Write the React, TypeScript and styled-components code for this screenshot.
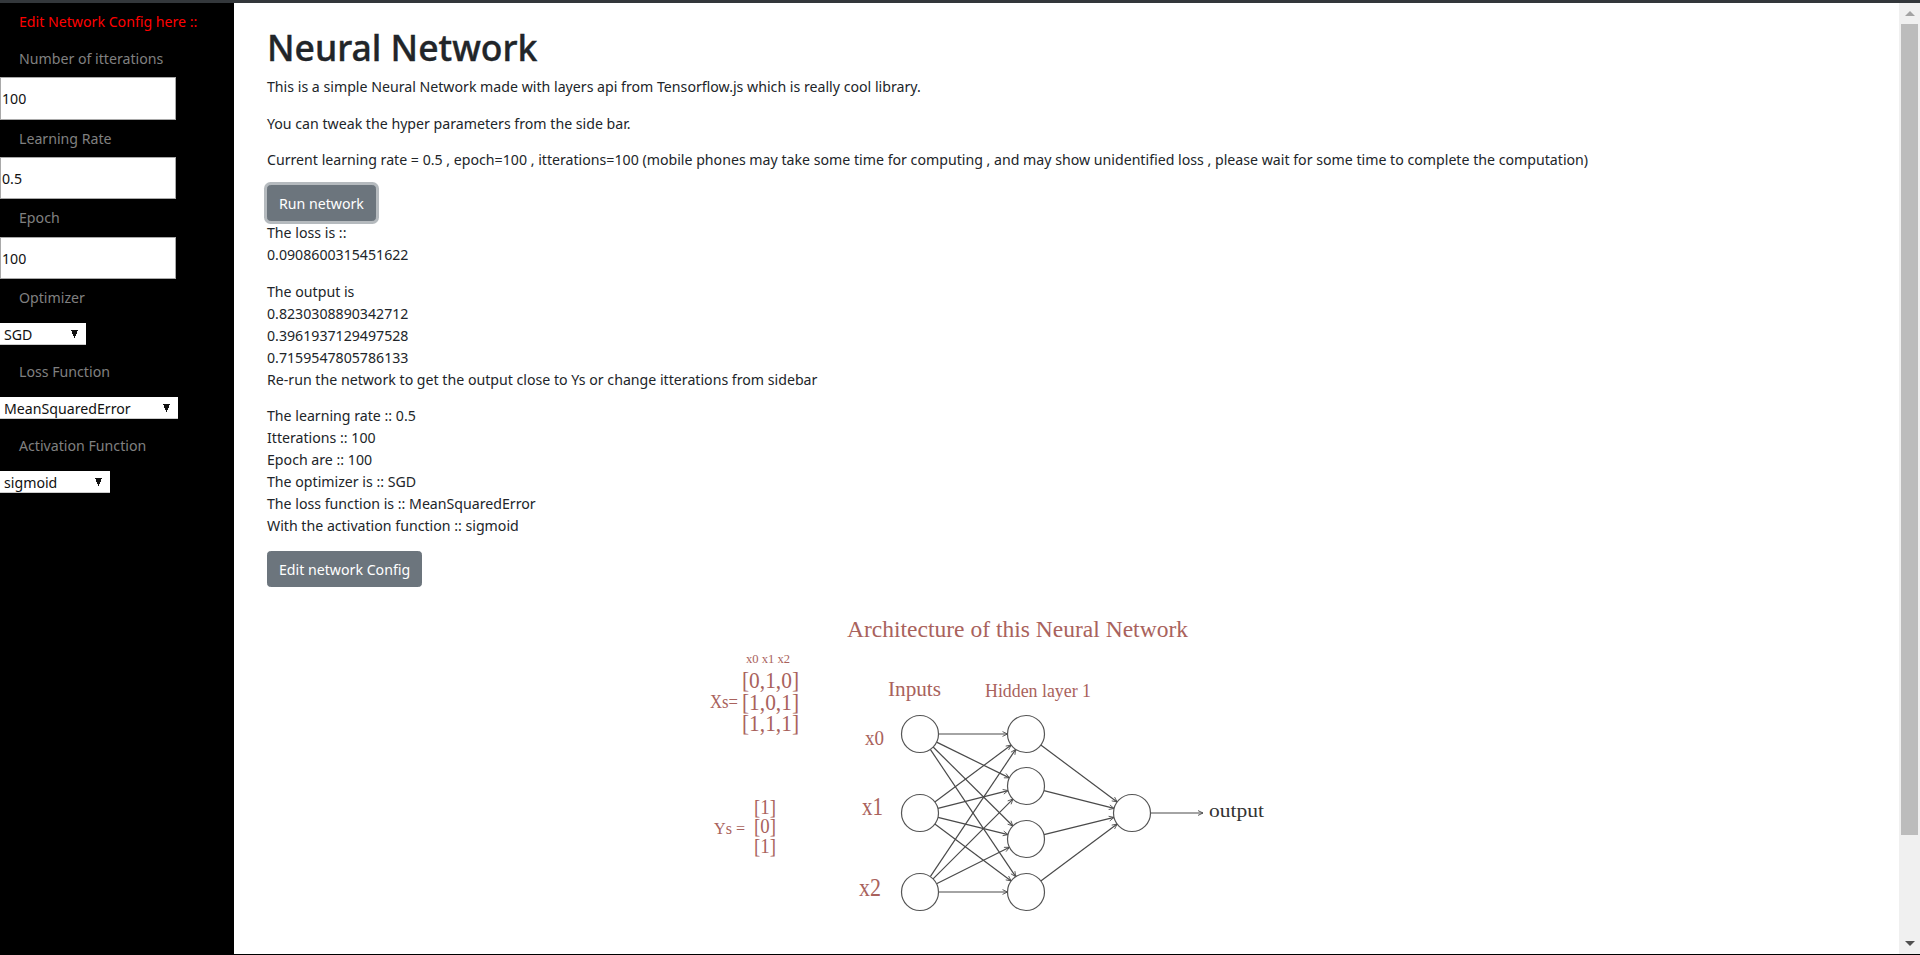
import React from "react";
import styled, { createGlobalStyle } from "styled-components";

const Global = createGlobalStyle`
  html, body { margin: 0; padding: 0; height: 100%; overflow: hidden; background: #000; }
  * { box-sizing: border-box; }
  body { font-family: "Noto Sans", "Open Sans", Arial, sans-serif; font-size: 14.17px; line-height: 22px; color: #212529; }
`;

const Frame = styled.div`
  height: 955px;
  display: flex;
  flex-direction: column;
  background: #000;
`;
const TopEdge = styled.div`
  height: 3px;
  flex: none;
  background: #33373b;
`;
const Body = styled.div`
  flex: 1;
  min-height: 0;
  display: flex;
`;
const BottomEdge = styled.div`
  height: 1px;
  flex: none;
  background: #000;
`;
const Sidebar = styled.aside`
  width: 234px;
  flex: none;
  background: #000;
  padding-top: 8px;
  display: flex;
  flex-direction: column;
  align-items: flex-start;
`;
const SideTitle = styled.div`
  padding-left: 19px;
  color: #f00;
  margin-bottom: 14px;
`;
const SideLabel = styled.label<{ $gap?: number; $nudge?: boolean }>`
  padding-left: 19px;
  padding-top: ${(p) => (p.$nudge ? 1 : 0)}px;
  color: #808080;
  margin-bottom: ${(p) => (p.$gap ?? 8) - (p.$nudge ? 1 : 0)}px;
`;
const NumberField = styled.input<{ $tall?: boolean }>`
  width: 176px;
  height: ${(p) => (p.$tall ? 43 : 42)}px;
  margin-bottom: ${(p) => (p.$tall ? 7 : 8)}px;
  border: 1px solid #a9a9a9;
  background: #fff;
  padding: 0 1px;
  font: inherit;
  color: #111;
  outline: none;
  border-radius: 0;
`;
const Choice = styled.select<{ $w: number }>`
  appearance: none;
  width: ${(p) => p.$w}px;
  height: 22px;
  margin-bottom: 16px;
  border: 0;
  border-bottom: 1px solid #ccc;
  border-radius: 0;
  padding: 1px 0 0 4px;
  font: inherit;
  line-height: 21px;
  color: #111;
  background: conic-gradient(from 336deg at 50% 100%, #111 48deg, transparent 0) right 8px center / 7px 8px no-repeat, #fff;
`;
const Main = styled.main`
  flex: 1;
  min-width: 0;
  background: #fff;
  overflow: hidden;
  padding: 22px 33px 0;
`;
const ScrollRail = styled.div`
  width: 21px;
  flex: none;
  background: #f0f0f0;
  display: flex;
  flex-direction: column;
  align-items: center;
`;
const ScrollArrow = styled.div<{ $down?: boolean }>`
  height: 21px;
  flex: none;
  display: flex;
  align-items: center;
  justify-content: center;
  &::before {
    content: "";
    border-left: 5px solid transparent;
    border-right: 5px solid transparent;
    ${(p) => (p.$down ? "border-top: 5px solid #505050;" : "border-bottom: 5px solid #a3a3a3;")}
  }
`;
const ScrollThumb = styled.div`
  width: 17px;
  height: 811px;
  flex: none;
  background: #bcbcbc;
`;
const ScrollGap = styled.div`
  flex: 1;
`;
const Title = styled.h1`
  margin: 0 0 6px;
  font-size: 35.5px;
  line-height: 44px;
  font-weight: 500;
  -webkit-text-stroke: 0.4px #212529;
  color: #212529;
`;
const Para = styled.p`
  margin: 0 0 13.7px;
  padding-top: 1px;
`;
const Button = styled.button<{ $focus?: boolean }>`
  display: block;
  height: 36px;
  padding: 1px 11px 0;
  border: 1px solid #6c757d;
  border-radius: 3.5px;
  background: #6c757d;
  color: #fff;
  font: inherit;
  box-shadow: ${(p) => (p.$focus ? "0 0 0 3px rgba(108,117,125,.5)" : "none")};
`;
const Figure = styled.svg`
  display: block;
  width: 752px;
  height: 473px;
  margin: 13px auto 0;
`;

const IN = [734, 813, 892].map((y) => ({ x: 919, y }));
const HID = [734, 786, 839, 892].map((y) => ({ x: 1025, y }));
const OUT = { x: 1131, y: 813 };
const R = 18.5;

function Edge({ a, b, r2 = R }: { a: { x: number; y: number }; b: { x: number; y: number }; r2?: number }) {
  const dx = b.x - a.x, dy = b.y - a.y;
  const l = Math.hypot(dx, dy);
  const ux = dx / l, uy = dy / l;
  const sx = a.x + ux * R, sy = a.y + uy * R;
  const ex = b.x - ux * r2, ey = b.y - uy * r2;
  const h = 5, w = 2.4;
  const p1 = `${ex - ux * h - uy * w},${ey - uy * h + ux * w}`;
  const p2 = `${ex - ux * h + uy * w},${ey - uy * h - ux * w}`;
  return (
    <g>
      <line x1={sx} y1={sy} x2={ex} y2={ey} stroke="#4a4a4a" strokeWidth="1.2" />
      <polyline points={`${p1} ${ex},${ey} ${p2}`} fill="none" stroke="#4a4a4a" strokeWidth="0.9" />
    </g>
  );
}

function Architecture() {
  const serif = "'Liberation Serif', serif";
  const red = "#a9625c";
  const T = ({ x, y, s, w, children }: { x: number; y: number; s: number; w?: number; children: string }) => (
    <text x={x} y={y} fontSize={s} fontFamily={serif} fill={red} textLength={w} lengthAdjust="spacingAndGlyphs">{children}</text>
  );
  return (
    <Figure viewBox="690 600 752 473">
      <T x={846} y={637} s={23} w={341}>Architecture of this Neural Network</T>
      <T x={745} y={663} s={12} w={44}>x0 x1 x2</T>
      <T x={741} y={688} s={24} w={57}>[0,1,0]</T>
      <T x={741} y={710} s={24} w={57}>[1,0,1]</T>
      <T x={741} y={731} s={24} w={57}>[1,1,1]</T>
      <T x={709} y={708} s={18} w={28}>Xs=</T>
      <T x={713} y={834} s={17} w={31}>Ys =</T>
      <T x={753} y={814} s={22} w={22}>[1]</T>
      <T x={753} y={833} s={22} w={22}>[0]</T>
      <T x={753} y={853} s={22} w={22}>[1]</T>
      <T x={887} y={696} s={21} w={53}>Inputs</T>
      <T x={984} y={697} s={18} w={106}>Hidden layer 1</T>
      <T x={864} y={745} s={21} w={19}>x0</T>
      <T x={861} y={815} s={26} w={21}>x1</T>
      <T x={858} y={896} s={26} w={22}>x2</T>
      {IN.map((a, i) => HID.map((b, j) => <Edge key={`${i}-${j}`} a={a} b={b} />))}
      {HID.map((a, i) => <Edge key={i} a={a} b={OUT} />)}
      <Edge a={OUT} b={{ x: 1202, y: 813 }} r2={0} />
      {[...IN, ...HID, OUT].map((c, i) => (
        <circle key={i} cx={c.x} cy={c.y} r={R} fill="#fff" stroke="#555" strokeWidth="1.2" />
      ))}
      <text x={1208} y={817} fontSize={18} fontFamily={serif} fill="#333" textLength={55} lengthAdjust="spacingAndGlyphs">output</text>
    </Figure>
  );
}

export default function App() {
  return (
    <Frame>
      <Global />
      <TopEdge />
      <Body>
        <Sidebar>
          <SideTitle>Edit Network Config here ::</SideTitle>
          <SideLabel $nudge>Number of itterations</SideLabel>
          <NumberField $tall defaultValue="100" />
          <SideLabel $nudge>Learning Rate</SideLabel>
          <NumberField defaultValue="0.5" />
          <SideLabel>Epoch</SideLabel>
          <NumberField defaultValue="100" />
          <SideLabel $gap={14}>Optimizer</SideLabel>
          <Choice $w={86} defaultValue="SGD"><option>SGD</option></Choice>
          <SideLabel $gap={14}>Loss Function</SideLabel>
          <Choice $w={178} defaultValue="MeanSquaredError"><option>MeanSquaredError</option></Choice>
          <SideLabel $gap={14}>Activation Function</SideLabel>
          <Choice $w={110} defaultValue="sigmoid"><option>sigmoid</option></Choice>
        </Sidebar>
        <Main>
          <Title>Neural Network</Title>
          <Para>This is a simple Neural Network made with layers api from Tensorflow.js which is really cool library.</Para>
          <Para>You can tweak the hyper parameters from the side bar.</Para>
          <Para>Current learning rate = 0.5 , epoch=100 , itterations=100 (mobile phones may take some time for computing , and may show unidentified loss , please wait for some time to complete the computation)</Para>
          <Button $focus>Run network</Button>
          <Para>The loss is ::<br />0.0908600315451622</Para>
          <Para>The output is<br />0.8230308890342712<br />0.3961937129497528<br />0.7159547805786133<br />Re-run the network to get the output close to Ys or change itterations from sidebar</Para>
          <Para>The learning rate :: 0.5<br />Itterations :: 100<br />Epoch are :: 100<br />The optimizer is :: SGD<br />The loss function is :: MeanSquaredError<br />With the activation function :: sigmoid</Para>
          <Button>Edit network Config</Button>
          <Architecture />
        </Main>
        <ScrollRail>
          <ScrollArrow />
          <ScrollThumb />
          <ScrollGap />
          <ScrollArrow $down />
        </ScrollRail>
      </Body>
      <BottomEdge />
    </Frame>
  );
}
